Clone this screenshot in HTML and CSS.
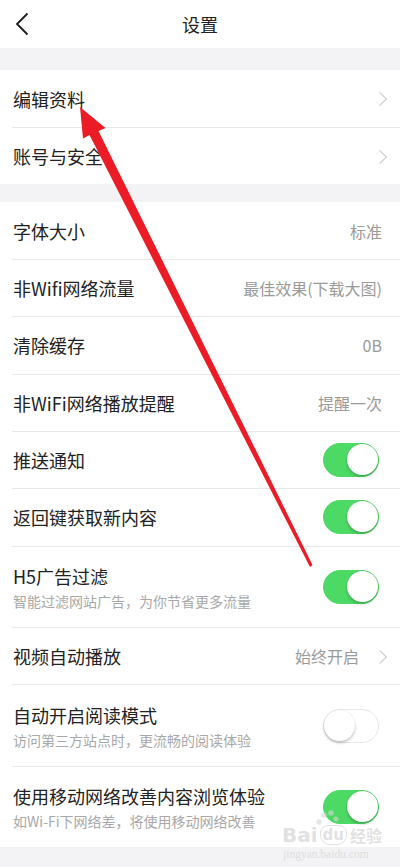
FILE: index.html
```html
<!DOCTYPE html>
<html lang="zh">
<head>
<meta charset="utf-8">
<title>设置</title>
<link rel="stylesheet" href="styles.css">
</head>
<body>
<div class="page">
  <header class="topbar">
    <svg class="back" width="14" height="24" viewBox="0 0 14 24"><path d="M12.5 1.5 L2 12 L12.5 22.5" fill="none" stroke="#1a1a1a" stroke-width="1.8"/></svg>
    <h1 class="title">设置</h1>
  </header>

  <section class="group first-group">
    <div class="row"><div class="inner"><span class="label">编辑资料</span><span class="spacer"></span><span class="chev"></span></div></div>
    <div class="row"><div class="inner"><span class="label">账号与安全</span><span class="spacer"></span><span class="chev"></span></div></div>
  </section>

  <section class="group second-group">
    <div class="row"><div class="inner"><span class="label">字体大小</span><span class="spacer"></span><span class="value">标准</span></div></div>
    <div class="row"><div class="inner"><span class="label">非Wifi网络流量</span><span class="spacer"></span><span class="value">最佳效果(下载大图)</span></div></div>
    <div class="row"><div class="inner"><span class="label">清除缓存</span><span class="spacer"></span><span class="value">0B</span></div></div>
    <div class="row"><div class="inner"><span class="label">非WiFi网络播放提醒</span><span class="spacer"></span><span class="value">提醒一次</span></div></div>
    <div class="row"><div class="inner toggle-row"><span class="label">推送通知</span><span class="spacer"></span><span class="switch on"><span class="knob"></span></span></div></div>
    <div class="row"><div class="inner toggle-row"><span class="label">返回键获取新内容</span><span class="spacer"></span><span class="switch on"><span class="knob"></span></span></div></div>
    <div class="row tall"><div class="inner toggle-row"><div class="texts"><span class="label">H5广告过滤</span><span class="sub">智能过滤网站广告，为你节省更多流量</span></div><span class="spacer"></span><span class="switch on"><span class="knob"></span></span></div></div>
    <div class="row"><div class="inner chev-row"><span class="label">视频自动播放</span><span class="spacer"></span><span class="value">始终开启</span><span class="chev"></span></div></div>
    <div class="row tall"><div class="inner toggle-row"><div class="texts"><span class="label">自动开启阅读模式</span><span class="sub">访问第三方站点时，更流畅的阅读体验</span></div><span class="spacer"></span><span class="switch"><span class="knob"></span></span></div></div>
    <div class="row tall"><div class="inner toggle-row"><div class="texts"><span class="label">使用移动网络改善内容浏览体验</span><span class="sub">如Wi-Fi下网络差，将使用移动网络改善</span></div><span class="spacer"></span><span class="switch on"><span class="knob"></span></span></div></div>
  </section>

  <svg class="arrow" width="400" height="867" viewBox="0 0 400 867">
    <polygon points="80,107 105.5,128 98.5,131 312.5,565 310,567 89.5,135 83,138.5" fill="#ec1c27"/>
  </svg>

  <div class="watermark">
    <svg class="paw" width="24" height="22" viewBox="0 0 24 22">
      <circle cx="4" cy="14" r="2.8"/><circle cx="9" cy="7" r="2.8"/><circle cx="16" cy="5" r="2.8"/><circle cx="21" cy="11" r="2.5"/>
    </svg>
    <div class="wm-line">
      <span class="wm-bai">Bai</span>
      <span class="wm-du">du</span>
      <span class="wm-jy">经验</span>
    </div>
    <div class="wm-url">jingyan.baidu.com</div>
  </div>
</div>
</body>
</html>
```

FILE: styles.css
```css
* { box-sizing: border-box; margin: 0; padding: 0; }
html, body { background: #f3f3f5; }
body {
  font-family: "Noto Sans CJK SC", "Noto Sans", sans-serif;
  color: #222;
  width: 400px;
  height: 867px;
  overflow: hidden;
}
.page { position: relative; width: 400px; height: 867px; }

.topbar {
  height: 48px;
  background: #fff;
  display: flex;
  align-items: center;
  justify-content: center;
  position: relative;
}
.back { position: absolute; left: 15px; top: 12px; }
.title { font-size: 18px; font-weight: 400; color: #222; line-height: 24px; }

.group { background: #fff; }
.first-group { margin-top: 22px; }
.second-group { margin-top: 18px; }

.row { padding-left: 12px; }
.inner {
  height: 57.33px;
  display: flex;
  align-items: center;
  padding-left: 1px;
  padding-right: 18px;
  border-top: 1px solid #e8e8ea;
}
.row:first-child .inner { border-top: none; height: 57px; }
.row.tall .inner { height: 81.5px; }
.first-group .inner { padding-right: 15.5px; height: 57px; }
.first-group .row:first-child .inner { height: 57px; }
.chev-row { padding-right: 15.5px; }
.toggle-row { padding-right: 21px; }

.label { font-size: 18px; line-height: 24px; color: #222; white-space: nowrap; }
.spacer { flex: 1; }
.value { font-size: 16px; color: #9a9a9a; line-height: 22px; white-space: nowrap; }
.chev {
  width: 9px; height: 12px;
  display: inline-block;
  position: relative;
  flex: none;
}
.chev::after {
  content: "";
  position: absolute;
  left: -1px; top: 1.5px;
  width: 9px; height: 9px;
  border-top: 1.3px solid #c8c8cc;
  border-right: 1.3px solid #c8c8cc;
  transform: rotate(45deg);
}
.value + .chev { margin-left: 16.5px; }

.texts { display: flex; flex-direction: column; gap: 4px; }
.sub { font-size: 14px; line-height: 18px; color: #a8a8a8; white-space: nowrap; }

.switch {
  width: 56px; height: 34px;
  border-radius: 17px;
  background: #fff;
  border: 1.5px solid #e6e6e6;
  position: relative;
  flex: none;
}
.switch.on { background: #4cd964; border-color: #4cd964; }
.knob {
  position: absolute;
  top: 0; left: 0;
  width: 31px; height: 31px;
  border-radius: 50%;
  background: #fff;
  box-shadow: 0 2px 3px rgba(0,0,0,0.22), 0 0 0 0.5px rgba(0,0,0,0.06);
}
.switch.on .knob { left: auto; right: 0; }

.arrow { position: absolute; left: 0; top: 0; pointer-events: none; }

.watermark {
  position: absolute;
  left: 282px;
  top: 808px;
  width: 110px;
  color: rgba(205,205,205,0.6);
  font-family: "DejaVu Sans", sans-serif;
  white-space: nowrap;
}
.paw { position: absolute; left: 33px; top: 0; fill: rgba(215,215,215,0.6); }
.wm-line { display: flex; align-items: center; height: 22px; margin-top: 16px; }
.wm-bai { font-size: 20px; font-weight: bold; line-height: 22px; }
.wm-du {
  font-size: 15px; font-weight: bold; line-height: 18px;
  border: 1.5px solid rgba(205,205,205,0.6);
  border-radius: 8px 8px 10px 10px;
  padding: 0 2px;
  margin-left: 2px;
}
.wm-jy { font-size: 16px; line-height: 22px; margin-left: 3px; font-family: "Noto Sans CJK SC", sans-serif; font-weight: bold; }
.wm-url { font-family: "Liberation Serif", serif; font-size: 11.5px; line-height: 12px; margin-top: 2px; margin-left: 1px; }
```
